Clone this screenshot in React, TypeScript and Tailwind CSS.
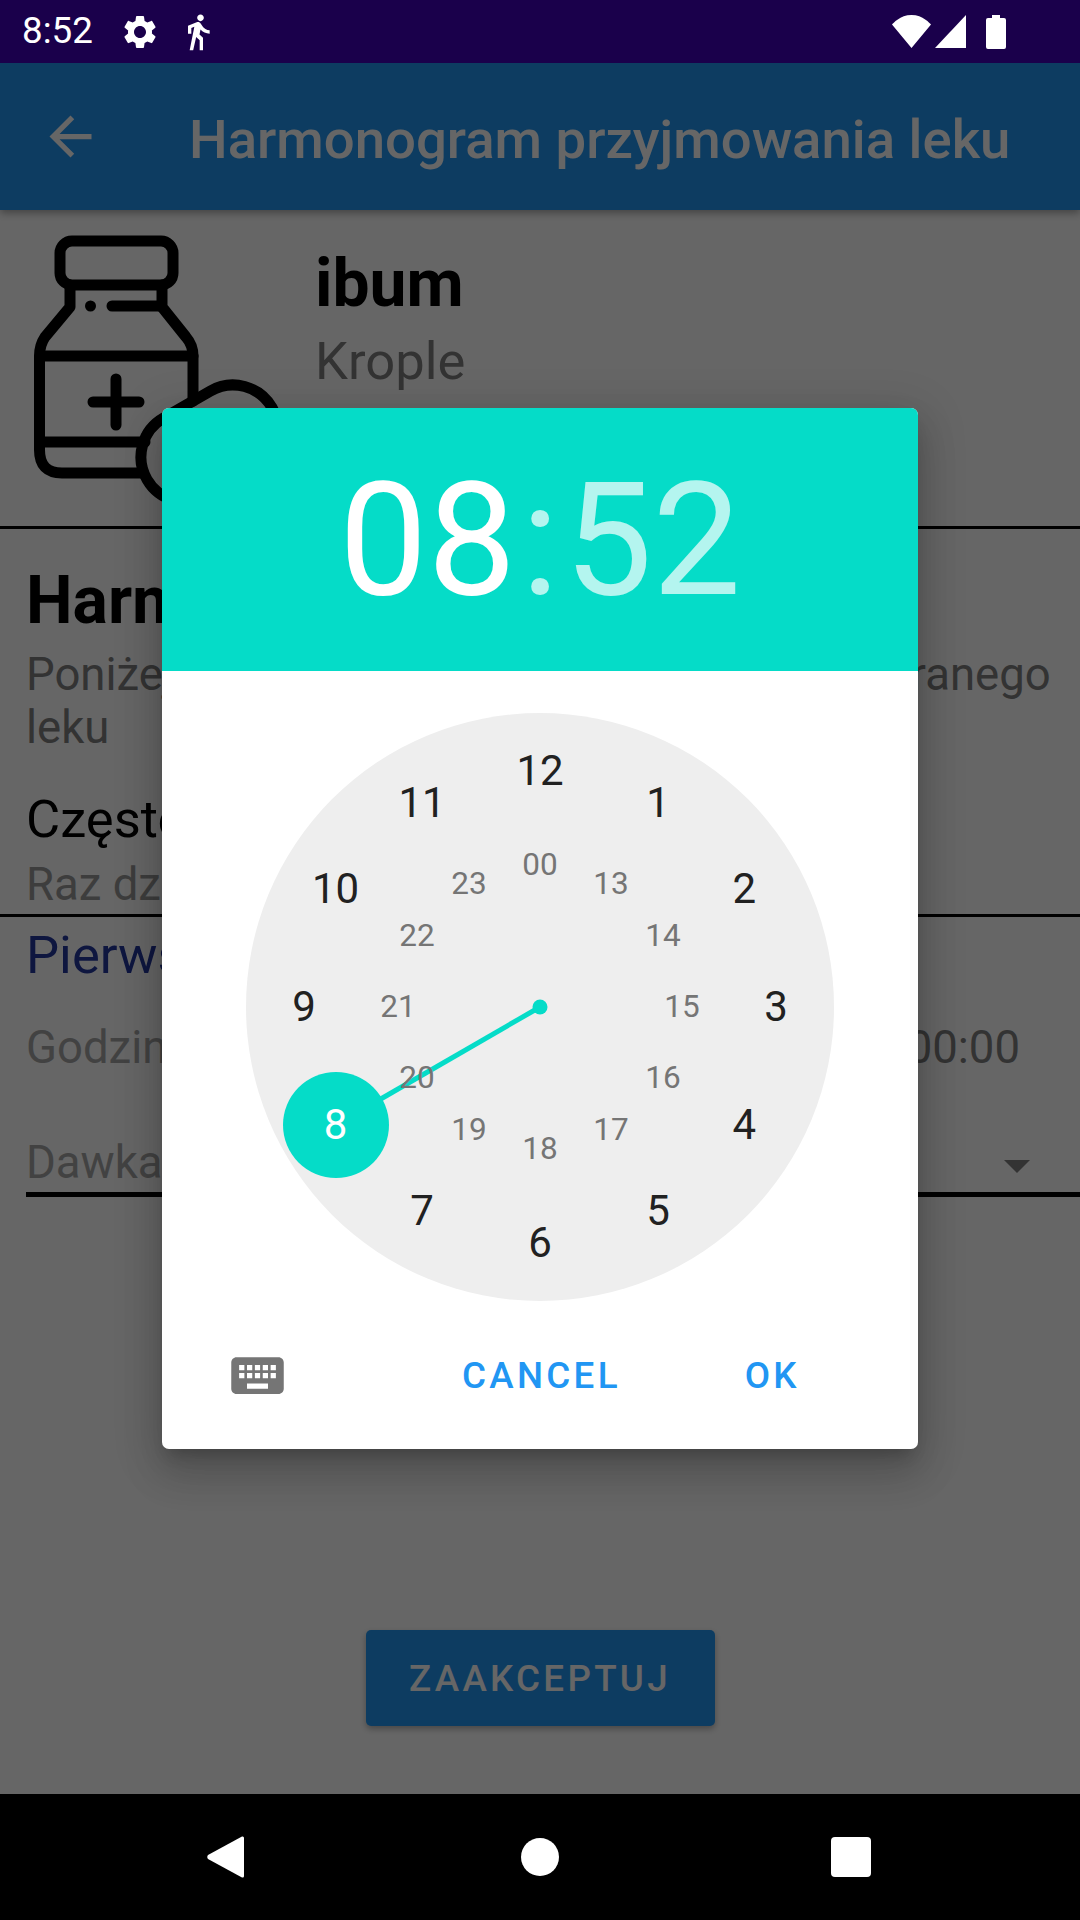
import React from "react";

const outer = ["12", "1", "2", "3", "4", "5", "6", "7", "8", "9", "10", "11"];
const inner = ["00", "13", "14", "15", "16", "17", "18", "19", "20", "21", "22", "23"];

function pos(i: number, r: number) {
  const a = (i * Math.PI) / 6;
  return { left: 294 + r * Math.sin(a), top: 294 - r * Math.cos(a) };
}

function Icon({ d, className }: { d: string; className: string }) {
  return (
    <svg viewBox="0 0 24 24" className={className} fill="currentColor">
      <path d={d} />
    </svg>
  );
}

function Bottle() {
  return (
    <svg viewBox="0 210 300 316" className="w-[300px] h-[316px] shrink-0 text-black" fill="none" stroke="currentColor" strokeWidth="11" strokeLinecap="round" strokeLinejoin="round">
      <rect x="60" y="241" width="113" height="44" rx="12" />
      <path d="M70 285V307L45 337Q39.500 345 39.500 356V450Q39.500 473 62 473H143" />
      <path d="M162 285V307L186 337Q193 345 193 356V401" />
      <path d="M40 356H193M40 442H145" />
      <path d="M93 402H139M116 379V425" />
      <path d="M112 306H160" />
      <circle cx="90.5" cy="306" r="5.5" fill="currentColor" stroke="none" />
      <path d="M163.5 418L210.5 391A45 45 0 0 1 255.5 469L208.5 496A45 45 0 0 1 163.5 418Z" />
    </svg>
  );
}

function StatusBar() {
  return (
    <div className="h-[63px] bg-[#1a004b] text-white flex items-center relative z-30 shrink-0">
      <span className="ml-[22px] w-[70px] text-[36.75px] leading-none whitespace-nowrap">8:52</span>
      <Icon className="w-[40px] h-[40px] ml-[28px]" d="M19.14 12.94c.04-.3.06-.61.06-.94 0-.32-.02-.64-.07-.94l2.03-1.58c.18-.14.23-.41.12-.61l-1.92-3.32c-.12-.22-.37-.29-.59-.22l-2.39.96c-.5-.38-1.03-.7-1.62-.94l-.36-2.54c-.04-.24-.24-.41-.48-.41h-3.84c-.24 0-.43.17-.47.41l-.36 2.54c-.59.24-1.13.57-1.62.94l-2.39-.96c-.22-.08-.47 0-.59.22L2.74 8.87c-.12.21-.08.47.12.61l2.03 1.58c-.05.3-.09.63-.09.94s.02.64.07.94l-2.03 1.58c-.18.14-.23.41-.12.61l1.92 3.32c.12.22.37.29.59.22l2.39-.96c.5.38 1.03.7 1.62.94l.36 2.54c.05.24.24.41.48.41h3.84c.24 0 .44-.17.47-.41l.36-2.54c.59-.24 1.13-.56 1.62-.94l2.39.96c.22.08.47 0 .59-.22l1.92-3.32c.12-.22.07-.47-.12-.61l-2.01-1.58zM12 15.6c-1.98 0-3.6-1.62-3.6-3.6s1.62-3.6 3.6-3.6 3.6 1.62 3.6 3.6-1.62 3.6-3.6 3.6z" />
      <Icon className="w-[40px] h-[40px] ml-[18px]" d="M13.5 5.5c1.1 0 2-.9 2-2s-.9-2-2-2-2 .9-2 2 .9 2 2 2zM9.8 8.9L7 23h2.1l1.8-8 2.1 2v6h2v-7.5l-2.1-2 .6-3C14.8 12 16.8 13 19 13v-2c-1.9 0-3.5-1-4.3-2.4l-1-1.6c-.4-.6-1-1-1.7-1-.3 0-.5.1-.8.1L6 8.3V13h2V9.6l1.8-.7" />
      <div className="flex-1" />
      <svg viewBox="0 0 39 33" className="w-[39px] h-[33px] mr-[4px]" fill="currentColor"><path d="M19.5 33L39 9.5C38 8.6 31 0 19.5 0S1 8.6 0 9.5Z" /></svg>
      <svg viewBox="0 0 31 33" className="w-[31px] h-[33px] mr-[20px]" fill="currentColor"><path d="M31 0V33H0Z" /></svg>
      <svg viewBox="0 0 20 34" className="w-[20px] h-[34px] mr-[74px]" fill="currentColor"><path d="M6 0H14V3H18Q20 3 20 5V32Q20 34 18 34H2Q0 34 0 32V5Q0 3 2 3H6Z" /></svg>
    </div>
  );
}

function Page() {
  return (
    <div className="flex-1 flex flex-col bg-white relative">
      <div className="h-[147px] bg-[#2196f3] text-white flex items-center shrink-0 shadow-[0_3px_8px_rgba(0,0,0,0.35)] relative z-10">
        <Icon className="w-[63px] h-[63px] ml-[39px]" d="M20 11H7.83l5.59-5.59L12 4l-8 8 8 8 1.41-1.41L7.83 13H20v-2z" />
        <span className="ml-[87px] mt-[5px] text-[54.5px] font-medium leading-none whitespace-nowrap">Harmonogram przyjmowania leku</span>
      </div>

      <div className="h-[319px] border-b-[3px] border-black flex shrink-0">
        <Bottle />
        <div className="flex flex-col pl-[16px]">
          <span className="mt-[36px] text-[66px] font-bold leading-[76px] text-black -ml-[1px]">ibum</span>
          <span className="mt-[8px] text-[52.5px] leading-[62px] text-[#808080] -ml-[1px]">Krople</span>
        </div>
      </div>

      <div className="pl-[26px] pr-[27px] pt-[34px] flex flex-col">
        <span className="text-[66px] font-bold leading-[76px] text-black">Harmonogram</span>
        <span className="mt-[9px] text-[45.5px] leading-[53px] text-[#808080] whitespace-nowrap [word-spacing:4.6px]">Poniżej znajduje się harmonogram dla wybranego<br />leku</span>
        <span className="mt-[34px] text-[52.5px] leading-[62px] text-black">Częstotliwość</span>
        <span className="text-[45.5px] leading-[53px] text-[#999999] mt-[8px]">Raz dziennie</span>
      </div>
      <div className="h-[3px] bg-black mt-[3px] shrink-0" />
      <div className="pl-[26px] pr-[27px]">
        <div className="text-[52.5px] leading-[62px] text-[#24389f] mt-[7px]">Pierwsza dawka</div>
        <div className="flex justify-between mt-[35px] pr-[33px] text-[45.5px] leading-[54px] text-[#a6a6a6]">
          <span>Godzina</span>
          <span className="text-[#808080]">00:00</span>
        </div>
      </div>
      <div className="ml-[26px] mt-[55px] h-[67px] pt-[6px] border-b-[5px] border-black relative text-[45.5px] leading-[54px] text-[#a6a6a6] shrink-0">
        <span>Dawka</span>
        <div className="absolute right-[50px] top-[30px] w-0 h-0 border-l-[13px] border-r-[13px] border-t-[13px] border-l-transparent border-r-transparent border-t-[#808080]" />
      </div>

      <div className="flex justify-center mt-[433px]">
        <div className="w-[349px] h-[96px] rounded-[5px] bg-[#2196f3] text-white text-[36.75px] font-medium tracking-[3.3px] flex items-center justify-center pt-[1px] shadow-[0_3px_6px_rgba(0,0,0,0.3)]">ZAAKCEPTUJ</div>
      </div>
    </div>
  );
}

function Dial() {
  return (
    <div className="relative w-[588px] h-[588px] rounded-full bg-[#eeeeee] mx-auto">
      <svg viewBox="0 0 588 588" className="absolute inset-0 w-full h-full">
        <line x1="294" y1="294" x2="133" y2="387" stroke="#05dcc8" strokeWidth="5" />
        <circle cx="294" cy="294" r="7.5" fill="#05dcc8" />
      </svg>
      <div className="absolute left-[37px] top-[359px] w-[106px] h-[106px] rounded-full bg-[#05dcc8]" />
      {outer.map((t, i) => (
        <span key={t} style={pos(i, 236)} className={`absolute -translate-x-1/2 -translate-y-1/2 text-[42px] leading-none ${t === "8" ? "text-white" : "text-[#212121]"}`}>{t}</span>
      ))}
      {inner.map((t, i) => (
        <span key={t} style={pos(i, 142)} className="absolute -translate-x-1/2 -translate-y-1/2 text-[31.5px] leading-none text-[#757575]">{t}</span>
      ))}
    </div>
  );
}

function Dialog() {
  return (
    <div className="absolute left-[162px] top-[408px] w-[756px] h-[1041px] rounded-[7px] overflow-hidden bg-white flex flex-col z-30">
      <div className="h-[263px] pt-[3px] bg-[#05dcc8] flex items-center justify-center text-[157.5px] leading-none font-normal shrink-0">
        <span className="text-white">08</span>
        <span className="text-white/70 mx-[5px]">:</span>
        <span className="text-white/70">52</span>
      </div>
      <div className="pt-[42px]">
        <Dial />
      </div>
      <div className="flex-1 flex items-center relative">
        <Icon className="w-[63px] h-[63px] ml-[64px] text-[#757575]" d="M20 5H4c-1.1 0-1.99.9-1.99 2L2 17c0 1.1.9 2 2 2h16c1.1 0 2-.9 2-2V7c0-1.1-.9-2-2-2zm-9 3h2v2h-2V8zm0 3h2v2h-2v-2zM8 8h2v2H8V8zm0 3h2v2H8v-2zm-1 2H5v-2h2v2zm0-3H5V8h2v2zm9 7H8v-2h8v2zm0-4h-2v-2h2v2zm0-3h-2V8h2v2zm3 3h-2v-2h2v2zm0-3h-2V8h2v2z" />
        <span className="ml-[173px] mt-[2px] text-[36.75px] font-medium tracking-[3.3px] text-[#2196f3]">CANCEL</span>
        <span className="ml-[124px] mt-[2px] text-[36.75px] font-medium tracking-[3px] text-[#2196f3]">OK</span>
      </div>
    </div>
  );
}

function NavBar() {
  return (
    <div className="h-[126px] bg-black flex items-center relative z-30 shrink-0">
      <svg viewBox="0 0 37 42" className="w-[37px] h-[42px] ml-[207px]" fill="white"><path d="M35 0.5Q37 0 37 2V40Q37 42 35 41.5L1 23Q-0.5 21 1 19Z" /></svg>
      <div className="w-[38px] h-[38px] rounded-full bg-white ml-[277px]" />
      <div className="w-[40px] h-[40px] rounded-[4px] bg-white ml-[272px]" />
    </div>
  );
}

export default function App() {
  return (
    <div className="relative w-[1080px] h-[1920px] overflow-hidden flex flex-col bg-white font-['Roboto',sans-serif]">
      <StatusBar />
      <Page />
      <NavBar />
      <div className="absolute left-0 right-0 top-[63px] bottom-[126px] bg-black/60 z-20" />
      <div className="absolute left-[162px] top-[408px] w-[756px] h-[1041px] rounded-[7px] z-20 shadow-[0_24px_38px_3px_rgba(0,0,0,0.14),0_9px_46px_8px_rgba(0,0,0,0.12),0_11px_15px_-7px_rgba(0,0,0,0.2)]" />
      <Dialog />
    </div>
  );
}
